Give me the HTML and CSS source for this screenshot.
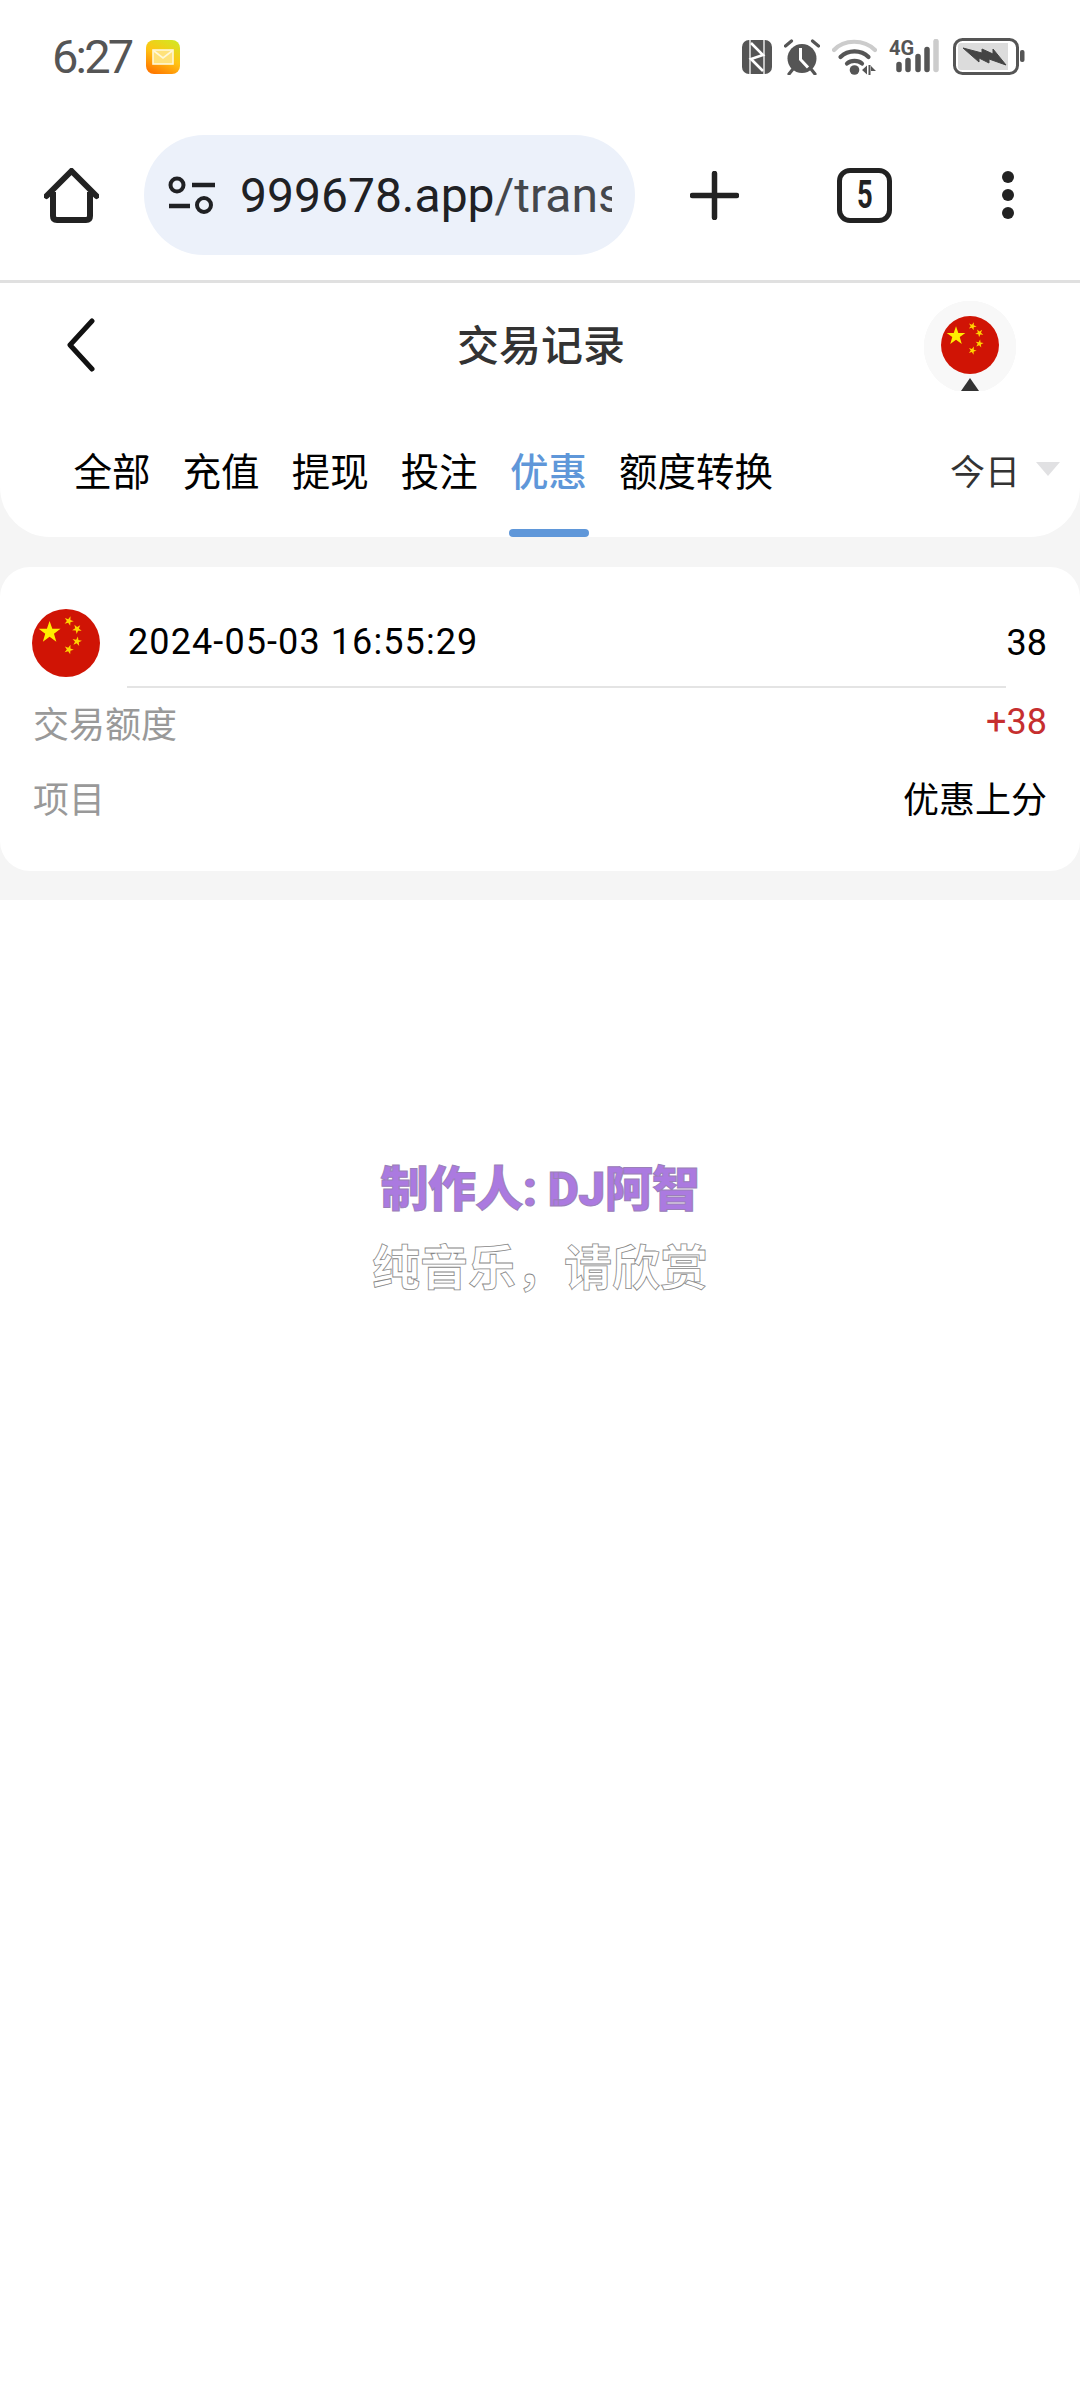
FILE: index.html
```html
<!DOCTYPE html>
<html>
  <head>
    <meta charset="UTF-8" />
    <title>交易记录</title>
    <link rel="stylesheet" href="styles.css">
  </head>
  <body>
    <svg class="defs" width="0" height="0">
      <polygon id="star" points="0,-10 2.35,-3.09 9.51,-3.09 3.8,1.18 5.88,8.09 0,3.82 -5.88,8.09 -3.8,1.18 -9.51,-3.09 -2.35,-3.09" />
      <symbol id="flag" viewBox="0 0 68 68">
        <circle cx="34" cy="34" r="34" fill="#d01405" />
        <use href="#star" fill="#ffee00" transform="translate(17.6 23.4) scale(1.15)" />
        <g fill="#ffd400">
          <use href="#star" transform="translate(36.8 12) rotate(20) scale(0.5)" />
          <use href="#star" transform="translate(45 20) rotate(40) scale(0.5)" />
          <use href="#star" transform="translate(45 32.400) rotate(10) scale(0.5)" />
          <use href="#star" transform="translate(36.8 40.500) rotate(20) scale(0.5)" />
        </g>
      </symbol>
    </svg>

    <div class="statusbar">
      <div class="status-left">
        <span class="time">6:27</span>
        <svg class="mail" width="34" height="34" viewBox="0 0 34 34">
          <defs>
            <linearGradient id="mailfill" x1="0.8" y1="0" x2="0.3" y2="1">
              <stop offset="0" stop-color="#d4e622" />
              <stop offset="0.5" stop-color="#ffc414" />
              <stop offset="1" stop-color="#ff7a00" />
            </linearGradient>
          </defs>
          <rect width="34" height="34" rx="8" fill="url(#mailfill)" />
          <rect x="7" y="10" width="20" height="14" fill="#ffe27a" stroke="#fff8d8" stroke-width="1.6" />
          <path d="M8 11l9 7 9-7" fill="none" stroke="#fff8d8" stroke-width="1.6" />
        </svg>
      </div>
      <div class="status-right">
        <svg width="30" height="34" viewBox="0 0 30 34">
          <rect width="30" height="34" rx="7" fill="#555" />
          <path d="M8 0v34M22 0v34" stroke="#fff" stroke-width="1.300" />
          <path d="M9 3l12 12L9 19l12 12" fill="none" stroke="#fff" stroke-width="2.600" />
        </svg>
        <svg width="36" height="36" viewBox="0 0 36 36">
          <circle cx="18" cy="19.500" r="14.500" fill="#555" />
          <path d="M16.500 9v11.500l7.500 8" fill="none" stroke="#fff" stroke-width="3" />
          <path d="M1.500 7l6-5M34.500 7l-6-5M5 35l4-5M31 35l-4-5" fill="none" stroke="#555" stroke-width="3.200" stroke-linecap="round" />
        </svg>
        <svg width="45" height="36" viewBox="0 0 45 36">
          <path d="M2 11C12 0 32 0 43 11" fill="none" stroke="#ccc" stroke-width="4.200" stroke-linecap="round" />
          <path d="M8.500 18C16 10.500 29 10.500 36.500 18" fill="none" stroke="#555" stroke-width="4.200" stroke-linecap="round" />
          <path d="M15 24.500C19 21 26 21 30 24.500" fill="none" stroke="#555" stroke-width="4.200" stroke-linecap="round" />
          <circle cx="22.500" cy="31" r="4.800" fill="#555" />
          <path d="M30 31l5-4.500v9zM36.500 26h2v10h-2zM39 27l5 5h-5z" fill="#555" />
        </svg>
        <div class="signal">
          <span class="net">4G</span>
          <svg width="50" height="36" viewBox="0 0 50 36">
            <g fill="none" stroke="#555" stroke-width="5.500" stroke-linecap="round">
              <path d="M10 25.500v5M19 21.500v9M29 17.500v13M38 10.500v20" />
              <path d="M47 2.500v28" stroke="#ccc" />
            </g>
          </svg>
        </div>
        <svg width="74" height="38" viewBox="0 0 74 38">
          <rect x="3.500" y="1.500" width="63" height="34" rx="8" fill="#fff" stroke="#555" stroke-width="3" />
          <path d="M7 8q0-3 3-3h47v27H10q-3 0-3-3z" fill="#dcdcdc" />
          <path d="M12 10l19 5 0-4 11 5 0-5 13 16-17-6 0 4-10-5 0 4z" fill="#444" stroke="#444" stroke-width="1" />
          <rect x="69" y="12" width="4.500" height="12" rx="2" fill="#555" />
        </svg>
      </div>
    </div>

    <div class="toolbar">
      <svg class="home" width="55" height="55" viewBox="0 0 55 55">
        <path d="M2.500 28L27.500 3l25 25" fill="none" stroke="#222" stroke-width="6" stroke-linecap="round" stroke-linejoin="round" />
        <path d="M9 24v24q0 4 4 4h29q4 0 4-4V24" fill="none" stroke="#222" stroke-width="6" />
      </svg>
      <div class="address">
        <svg class="site-info" width="48" height="38" viewBox="0 0 48 38">
          <circle cx="9" cy="9" r="6.500" fill="none" stroke="#202124" stroke-width="4" />
          <path d="M24 9h23M1 30h21" stroke="#202124" stroke-width="4.500" />
          <circle cx="36" cy="29" r="7" fill="none" stroke="#202124" stroke-width="4" />
        </svg>
        <div class="url">999678.app<span class="url-path">/transaction</span></div>
      </div>
      <svg class="plus" width="49" height="49" viewBox="0 0 49 49">
        <path d="M24.500 2.500v44M2.500 24.500h44" stroke="#222" stroke-width="5.500" stroke-linecap="round" />
      </svg>
      <div class="tab-count"><span>5</span></div>
      <div class="more">
        <span></span>
        <span></span>
        <span></span>
      </div>
    </div>

    <div class="page">
      <div class="head">
        <div class="nav">
          <svg class="back" width="30" height="54" viewBox="0 0 30 54">
            <path d="M26 3L4 27l22 24" fill="none" stroke="#111" stroke-width="5" stroke-linecap="round" stroke-linejoin="round" />
          </svg>
          <div class="title">交易记录</div>
          <div class="lang">
            <svg width="58" height="58"><use href="#flag" /></svg>
          </div>
        </div>
        <div class="tabs">
          <div class="tab">全部</div>
          <div class="tab">充值</div>
          <div class="tab">提现</div>
          <div class="tab">投注</div>
          <div class="tab active">优惠</div>
          <div class="tab">额度转换</div>
          <div class="range">今日<span class="caret"></span></div>
        </div>
      </div>

      <div class="card">
        <div class="card-top">
          <svg class="card-flag" width="68" height="68"><use href="#flag" /></svg>
          <div class="date">2024-05-03 16:55:29</div>
          <div class="amount">38</div>
        </div>
        <div class="card-line"></div>
        <div class="row">
          <span class="label">交易额度</span>
          <span class="plus-value">+38</span>
        </div>
        <div class="row">
          <span class="label">项目</span>
          <span>优惠上分</span>
        </div>
      </div>
    </div>

    <div class="lyrics">
      <div class="lyric-credit">制作人: DJ阿智</div>
      <div class="lyric-line">纯音乐，请欣赏</div>
    </div>
  </body>
</html>
```

FILE: styles.css
```css
* {
  box-sizing: border-box;
}

body {
  font-family: Roboto, "Noto Sans CJK SC", sans-serif;
  background-color: #fff;
  margin: 0;
  width: 1080px;
  height: 2400px;
  color: #000;
  overflow: hidden;
}

.defs {
  position: absolute;
}

svg {
  display: block;
  flex: none;
}

/* phone status bar */
.statusbar {
  height: 90px;
  padding: 24px 55px 0 52px;
  display: flex;
  justify-content: space-between;
  align-items: center;
}

.status-left {
  display: flex;
  align-items: center;
}

.time {
  font-size: 47px;
  letter-spacing: -2.8px;
  color: #555;
  line-height: 50px;
}

.mail {
  margin-left: 15px;
}

.status-right {
  display: flex;
  align-items: center;
  gap: 12px;
}

.signal {
  position: relative;
  width: 50px;
  height: 36px;
}

.net {
  position: absolute;
  top: -1px;
  left: 0;
  font-size: 20px;
  line-height: 20px;
  font-weight: 700;
  color: #555;
}

/* browser toolbar */
.toolbar {
  height: 193px;
  padding: 20px 0 0 44px;
  display: flex;
  align-items: center;
  border-bottom: 3px solid #e0e0e0;
}

.address {
  width: 491px;
  height: 120px;
  margin-left: 45px;
  padding-left: 24px;
  display: flex;
  align-items: center;
  background-color: #ecf1fa;
  border-radius: 60px;
}

.url {
  width: 372px;
  margin-left: 24px;
  overflow: hidden;
  white-space: nowrap;
  font-size: 48px;
  color: #202124;
}

.url-path {
  color: #44474c;
}

.plus {
  margin-left: 55px;
}

.tab-count {
  width: 55px;
  height: 55px;
  margin-left: 98px;
  border: 5.5px solid #222;
  border-radius: 13px;
  display: flex;
  align-items: center;
  justify-content: center;
  font-size: 38px;
  font-weight: 700;
  color: #222;
}

.tab-count span {
  transform: scaleX(0.72);
}

.more {
  margin-left: 110px;
  display: grid;
  gap: 6px;
}

.more span {
  width: 12px;
  height: 12px;
  border-radius: 50%;
  background-color: #222;
}

/* page */
.page {
  background-color: #f5f5f5;
  padding-bottom: 29px;
}

.head {
  background-color: #fff;
  border-radius: 0 0 50px 50px;
}

.nav {
  height: 124px;
  padding: 0 64px 0 66px;
  display: grid;
  grid-template-columns: 1fr auto 1fr;
  align-items: center;
}

.title {
  margin-bottom: 6px;
  font-size: 42px;
  font-weight: 500;
  color: #333;
}

.lang {
  justify-self: end;
  position: relative;
  width: 92px;
  height: 90px;
  margin-top: 2px;
  display: flex;
  align-items: center;
  justify-content: center;
  padding-bottom: 2px;
  background: radial-gradient(circle at 46px 46px, #f8f8f8 46px, transparent 46.5px);
}

.lang::after {
  content: "";
  position: absolute;
  left: 37px;
  bottom: 0;
  border-left: 9px solid transparent;
  border-right: 9px solid transparent;
  border-bottom: 13px solid #333;
}

.tabs {
  height: 130px;
  padding: 0 20px 6px 73.5px;
  display: flex;
  gap: 32.1px;
  align-items: center;
  font-size: 38.5px;
}

.tab {
  position: relative;
  height: 100%;
  display: flex;
  align-items: center;
}

.tab.active {
  font-weight: 500;
  color: #5f97d9;
}

.tab.active::after {
  content: "";
  position: absolute;
  left: -1px;
  right: -2px;
  bottom: -6px;
  height: 8px;
  border-radius: 4px;
  background-color: #5f97d9;
}

.range {
  margin-left: auto;
  display: flex;
  align-items: center;
  font-size: 35px;
  color: #333;
}

.caret {
  margin-left: 16px;
  border-left: 12px solid transparent;
  border-right: 12px solid transparent;
  border-top: 14px solid #e1e1e3;
}

.card {
  margin-top: 30px;
  padding: 42px 0 38px;
  background-color: #fff;
  border-radius: 30px;
  font-size: 36px;
}

.card-top {
  padding: 0 33px 0 32px;
  display: flex;
  align-items: center;
}

.card-flag {
  margin-right: 28px;
}

.date {
  flex: 1;
  letter-spacing: 1.1px;
  margin-bottom: 3px;
}

.amount {
  margin-bottom: 1px;
}

.card-line {
  width: 879px;
  height: 2px;
  margin: 9px 0 0 127px;
  background-color: #e4e4e4;
}

.row {
  height: 70px;
  margin-bottom: 5px;
  padding: 0 33px 3px 33px;
  display: flex;
  justify-content: space-between;
  align-items: center;
}

.row:last-child {
  margin-bottom: 0;
}

.label {
  color: #999;
}

.plus-value {
  color: #c62f2f;
}

/* lyric overlay text */
.lyrics {
  padding-top: 258px;
  text-align: center;
  font-size: 48px;
  font-weight: 900;
  line-height: 64px;
}

.lyric-credit {
  letter-spacing: -0.6px;
  color: #ab7ae0;
  -webkit-text-stroke: 1px #9a80b8;
}

.lyric-line {
  margin-top: 15px;
  font-weight: 700;
  color: #fff;
  -webkit-text-stroke: 0.8px #888;
}
```
